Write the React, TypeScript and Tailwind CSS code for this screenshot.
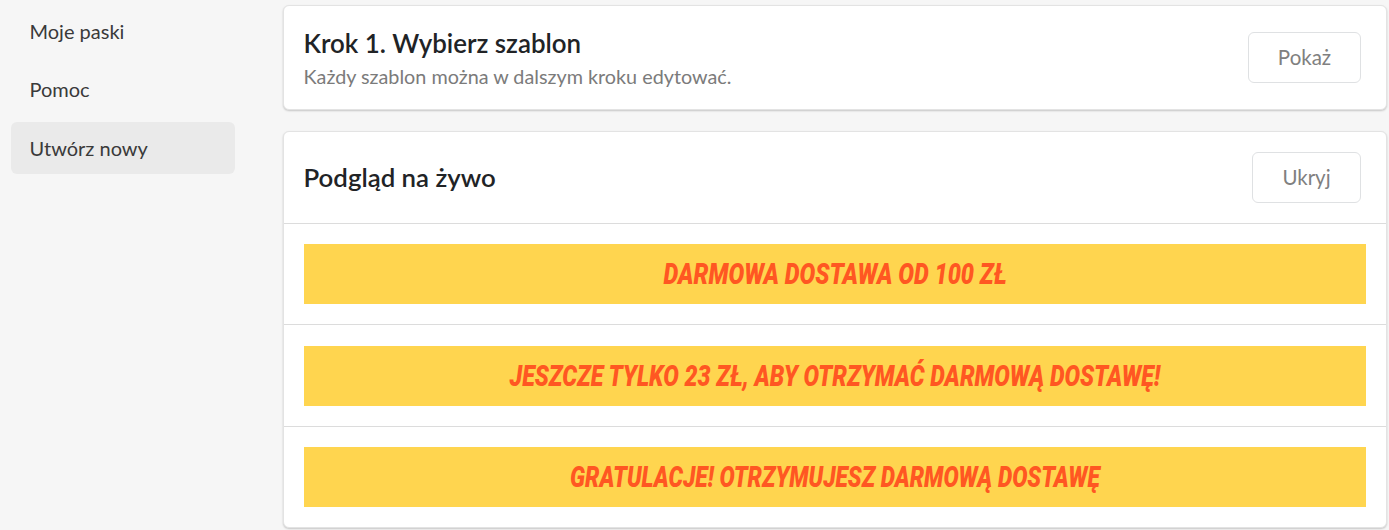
const lato = "font-['Lato','Noto_Sans',sans-serif]";

function NavItem({ label, active }: { label: string; active?: boolean }) {
  return (
    <div className={`flex h-[52px] items-center rounded-[6px] pl-[18.5px] text-[20px] text-[#3a3a3a] ${active ? "bg-[#eaeaea]" : ""}`}>
      {label}
    </div>
  );
}

function OutlineButton({ label, width }: { label: string; width: string }) {
  return (
    <button className={`h-[51px] ${width} rounded-[6px] border border-[#dfe1e3] bg-white text-center text-[20.5px] text-[#808080]`}>
      {label}
    </button>
  );
}

function Banner({ text, top, scale }: { text: string; top: string; scale: string }) {
  return (
    <div className={`border-t border-[#dcdcdc] px-[20px] pb-[20px] ${top}`}>
      <div className="flex h-[60px] items-center justify-center bg-[#ffd54f]">
        <span className={`inline-block ${scale} whitespace-nowrap font-['Roboto',sans-serif] text-[30px] leading-[36px] font-black italic uppercase text-[#ff5722]`}>
          {text}
        </span>
      </div>
    </div>
  );
}

export default function App() {
  return (
    <div className={`flex h-[530px] w-[1389px] overflow-hidden bg-[#f6f6f6] ${lato}`}>
      <aside className="ml-[11px] mt-[5px] flex w-[224px] shrink-0 flex-col gap-[6.4px]">
        <NavItem label="Moje paski" />
        <NavItem label="Pomoc" />
        <NavItem label="Utwórz nowy" active />
      </aside>
      <main className="ml-[48px] mt-[5px] flex w-[1104px] shrink-0 flex-col gap-[21px]">
        <section className="flex h-[105px] items-center justify-between rounded-[6px] border border-[#e3e3e3] bg-white pl-[19.5px] pr-[25px] shadow-[0_1px_2px_rgba(0,0,0,0.2)]">
          <div className="-mt-[1px]">
            <h2 className="text-[25.9px] leading-[32px] font-semibold text-[#212326]">Krok 1. Wybierz szablon</h2>
            <p className="mt-[5px] text-[19.8px] leading-[24px] text-[#7b7b7b]">Każdy szablon można w dalszym kroku edytować.</p>
          </div>
          <OutlineButton label="Pokaż" width="w-[113px]" />
        </section>
        <section className="rounded-[6px] border border-[#e3e3e3] bg-white shadow-[0_1px_2px_rgba(0,0,0,0.2)]">
          <div className="flex h-[91px] items-center justify-between pl-[19.5px] pr-[25px]">
            <h2 className="text-[25.8px] font-semibold text-[#212326]">Podgląd na żywo</h2>
            <OutlineButton label="Ukryj" width="w-[109px]" />
          </div>
          <Banner text="Darmowa dostawa od 100 zł" top="pt-[20px]" scale="scale-x-[0.783]" />
          <Banner text="Jeszcze tylko 23 zł, aby otrzymać darmową dostawę!" top="pt-[21px]" scale="scale-x-[0.773]" />
          <Banner text="Gratulacje! Otrzymujesz darmową dostawę" top="pt-[20px]" scale="scale-x-[0.757]" />
        </section>
      </main>
    </div>
  );
}
